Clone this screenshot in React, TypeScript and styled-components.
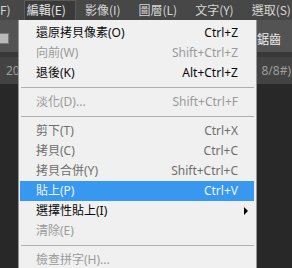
import React from "react";
import styled, { createGlobalStyle, css } from "styled-components";

const GlobalStyle = createGlobalStyle`
  html, body { margin: 0; padding: 0; background: #282828; }
  #root { width: 292px; height: 268px; }
`;

const FONT = `"Noto Sans", "Noto Sans CJK TC", sans-serif`;

const Screen = styled.div`
  position: relative;
  width: 292px;
  height: 268px;
  overflow: hidden;
  background: #282828;
  font-family: ${FONT};
  font-size: 12px;
  display: flex;
  flex-direction: column;
`;

const MenuBar = styled.div`
  display: flex;
  height: 20px;
  background: #474747;
  color: #d6d6d6;
  flex-shrink: 0;
  font-family: "Noto Sans CJK TC", sans-serif;
`;

const MenuBarItem = styled.div<{ $active?: boolean; $first?: boolean }>`
  height: 20px;
  line-height: 20px;
  padding: 0 9px;
  box-sizing: border-box;
  white-space: nowrap;
  ${(p) =>
    p.$first &&
    css`
      padding: 0 13px 0 0;
    `}
  ${(p) =>
    p.$active &&
    css`
      padding: 0 10px 0 3px;
      background: #3a3a3a;
      color: #e4e4e4;
      box-shadow: inset 1px 1px 0 #5a5a5a, inset -1px 0 0 #5a5a5a;
    `}
`;

const OptionsBar = styled.div`
  height: 32px;
  background: #535353;
  display: flex;
  align-items: center;
  justify-content: space-between;
  flex-shrink: 0;
`;

const CheckBox = styled.div`
  width: 8px;
  height: 9px;
  margin-top: 4px;
  background: #b9b9b9;
  border: 1px solid #7a7a7a;
  border-left: none;
`;

const OptionLabel = styled.span`
  color: #ececec;
  margin-right: 11px;
  margin-top: 6px;
`;

const Divider = styled.div`
  height: 5px;
  background: #383838;
  flex-shrink: 0;
`;

const TabBar = styled.div`
  height: 27px;
  background: #434343;
  color: #9c9c9c;
  display: flex;
  align-items: center;
  justify-content: space-between;
  padding: 0 1px 0 6px;
  flex-shrink: 0;
`;

const Canvas = styled.div`
  flex: 1;
  background: #282828;
`;

const Dropdown = styled.div`
  position: absolute;
  left: 18px;
  top: 20px;
  width: 239px;
  box-sizing: border-box;
  background: #f0f0f0;
  border-left: 1px solid #979797;
  border-right: 1px solid #979797;
  padding: 3px 2px 0 1px;
  color: #000;
`;

type Tone = "normal" | "dim" | "disabled";

const toneColor: Record<Tone, string> = {
  normal: "#0a0a0a",
  dim: "#6e6e6e",
  disabled: "#9a9a9a",
};

const Row = styled.div<{ $tone: Tone; $hl?: boolean }>`
  position: relative;
  display: flex;
  justify-content: space-between;
  height: 20px;
  line-height: 20px;
  padding: 0 16px;
  white-space: nowrap;
  color: ${(p) => toneColor[p.$tone]};
  ${(p) =>
    p.$hl &&
    css`
      background: #3898f0;
      color: #eef4fc;
    `}
`;

const Shortcut = styled.span``;

const SubArrow = styled.span`
  position: absolute;
  right: 6px;
  top: 6px;
  width: 0;
  height: 0;
  border-top: 4px solid transparent;
  border-bottom: 4px solid transparent;
  border-left: 4px solid #000;
`;

const Separator = styled.div`
  height: 9px;
  padding-top: 4px;
  box-sizing: border-box;
  &::after {
    content: "";
    display: block;
    height: 1px;
    background: #b0b0b0;
    margin-left: 1px;
  }
`;

type Item =
  | { sep: true }
  | { sep?: false; label: string; key?: string; tone: Tone; hl?: boolean; sub?: boolean };

const items: Item[] = [
  { label: "還原拷貝像素(O)", key: "Ctrl+Z", tone: "normal" },
  { label: "向前(W)", key: "Shift+Ctrl+Z", tone: "disabled" },
  { label: "退後(K)", key: "Alt+Ctrl+Z", tone: "normal" },
  { sep: true },
  { label: "淡化(D)...", key: "Shift+Ctrl+F", tone: "disabled" },
  { sep: true },
  { label: "剪下(T)", key: "Ctrl+X", tone: "dim" },
  { label: "拷貝(C)", key: "Ctrl+C", tone: "dim" },
  { label: "拷貝合併(Y)", key: "Shift+Ctrl+C", tone: "dim" },
  { label: "貼上(P)", key: "Ctrl+V", tone: "normal", hl: true },
  { label: "選擇性貼上(I)", tone: "normal", sub: true },
  { label: "清除(E)", tone: "disabled" },
  { sep: true },
  { label: "檢查拼字(H)...", tone: "disabled" },
];

export default function App() {
  return (
    <>
      <GlobalStyle />
      <Screen>
        <MenuBar>
          <MenuBarItem $first>F)</MenuBarItem>
          <MenuBarItem $active>編輯(E)</MenuBarItem>
          <MenuBarItem>影像(I)</MenuBarItem>
          <MenuBarItem>圖層(L)</MenuBarItem>
          <MenuBarItem>文字(Y)</MenuBarItem>
          <MenuBarItem>選取(S)</MenuBarItem>
        </MenuBar>
        <OptionsBar>
          <CheckBox />
          <OptionLabel>鋸齒</OptionLabel>
        </OptionsBar>
        <Divider />
        <TabBar>
          <span>20</span>
          <span>8/8#)</span>
        </TabBar>
        <Canvas />
        <Dropdown>
          {items.map((it, i) =>
            it.sep ? (
              <Separator key={i} />
            ) : (
              <Row key={i} $tone={it.tone} $hl={it.hl}>
                <span>{it.label}</span>
                {it.key && <Shortcut>{it.key}</Shortcut>}
                {it.sub && <SubArrow />}
              </Row>
            )
          )}
        </Dropdown>
      </Screen>
    </>
  );
}
